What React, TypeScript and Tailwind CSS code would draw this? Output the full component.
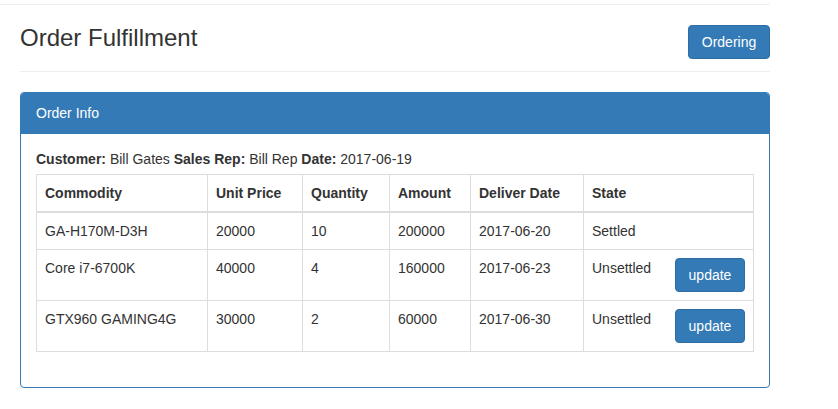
const rows = [
  { name: 'GA-H170M-D3H', price: 20000, qty: 10, amount: 200000, date: '2017-06-20', settled: true },
  { name: 'Core i7-6700K', price: 40000, qty: 4, amount: 160000, date: '2017-06-23', settled: false },
  { name: 'GTX960 GAMING4G', price: 30000, qty: 2, amount: 60000, date: '2017-06-30', settled: false },
];

function BlueButton({ children, className = '' }: { children: React.ReactNode; className?: string }) {
  return (
    <button
      className={`rounded-[4px] border border-[#2e6da4] bg-[#337ab7] px-3 py-[6px] text-center text-[14px] leading-[20px] text-white ${className}`}
    >
      {children}
    </button>
  );
}

export default function App() {
  return (
    <div className="min-h-screen bg-white pt-1 text-[14px] leading-[20px] text-[#333] [font-family:'Liberation_Sans',Arial,sans-serif]">
      <div className="w-[770px]">
        <div className="h-px bg-[#eee]" />
        <div className="ml-5 mt-5">
          <div className="flex items-start justify-between border-b border-[#eee] pb-3">
            <h3 className="text-[24px] leading-[26.4px] font-medium">Order Fulfillment</h3>
            <BlueButton className="w-[82px]">Ordering</BlueButton>
          </div>

          <div className="mt-5 rounded-[4px] border border-[#337ab7]">
            <div className="rounded-t-[3px] border-b border-[#337ab7] bg-[#337ab7] px-[15px] py-[10px] text-white">
              Order Info
            </div>
            <div className="p-[15px]">
              <p className="mb-[5px]">
                <b>Customer:</b> Bill Gates <b>Sales Rep:</b> Bill Rep <b>Date:</b> 2017-06-19
              </p>
              <table className="mb-5 w-full table-fixed border border-[#ddd] text-left">
                <thead>
                  <tr>
                    <th className="w-[171px] border border-b-2 border-[#ddd] p-2 font-bold">Commodity</th>
                    <th className="w-[95px] border border-b-2 border-[#ddd] p-2 font-bold">Unit Price</th>
                    <th className="w-[87px] border border-b-2 border-[#ddd] p-2 font-bold">Quantity</th>
                    <th className="w-[81px] border border-b-2 border-[#ddd] p-2 font-bold">Amount</th>
                    <th className="w-[113px] border border-b-2 border-[#ddd] p-2 font-bold">Deliver Date</th>
                    <th className="border border-b-2 border-[#ddd] p-2 font-bold">State</th>
                  </tr>
                </thead>
                <tbody>
                  {rows.map((r) => (
                    <tr key={r.name}>
                      <td className="border border-[#ddd] p-2 align-top">{r.name}</td>
                      <td className="border border-[#ddd] p-2 align-top">{r.price}</td>
                      <td className="border border-[#ddd] p-2 align-top">{r.qty}</td>
                      <td className="border border-[#ddd] p-2 align-top">{r.amount}</td>
                      <td className="border border-[#ddd] p-2 align-top">{r.date}</td>
                      <td className="border border-[#ddd] p-2 align-top">
                        {r.settled ? (
                          'Settled'
                        ) : (
                          <div className="flex items-start justify-between">
                            <span>Unsettled</span>
                            <BlueButton className="w-[70px]">update</BlueButton>
                          </div>
                        )}
                      </td>
                    </tr>
                  ))}
                </tbody>
              </table>
            </div>
          </div>
        </div>
      </div>
    </div>
  );
}
